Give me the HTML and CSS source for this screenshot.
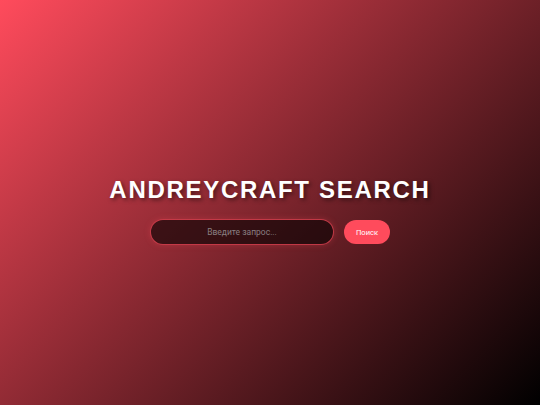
FILE: index.html
```html
<!DOCTYPE html>
<html lang="ru">
<head>
<meta charset="utf-8">
<title>AndreyCraft Search</title>
<link rel="stylesheet" href="styles.css">
</head>
<body>
<main class="page">
  <h1 class="title">AndreyCraft Search</h1>
  <form class="search">
    <input class="search-input" type="text" placeholder="Введите запрос...">
    <button class="search-btn" type="button">Поиск</button>
  </form>
</main>
</body>
</html>
```
FILE: styles.css
```css
html, body {
  margin: 0;
  height: 100%;
}
body {
  background: linear-gradient(135deg, #ff4b5c 0%, #000000 100%);
  font-family: "Liberation Sans", Arial, sans-serif;
}
.page {
  box-sizing: border-box;
  min-height: 100vh;
  padding-top: 16px;
  display: flex;
  flex-direction: column;
  align-items: center;
  justify-content: center;
}
.title {
  margin: 0 0 15px 0;
  font-size: 24px;
  line-height: 28px;
  font-weight: bold;
  text-transform: uppercase;
  letter-spacing: 1.7px;
  color: #fff;
  text-shadow: 2px 2px 4px rgba(0, 0, 0, 0.5);
}
.search {
  display: flex;
  align-items: center;
  gap: 10px;
  margin: 0;
}
.search-input {
  box-sizing: border-box;
  width: 184px;
  height: 26px;
  border: 1px solid rgba(255, 75, 92, 0.7);
  border-radius: 13px;
  background: rgba(0, 0, 0, 0.6);
  color: #ddd;
  text-align: center;
  font-family: Roboto, "Liberation Sans", sans-serif;
  font-size: 8.5px;
  outline: none;
  padding: 0 10px;
  box-shadow: 0 0 6px rgba(255, 75, 92, 0.25);
}
.search-input::placeholder {
  color: #8a7f82;
}
.search-btn {
  box-sizing: border-box;
  width: 46px;
  height: 24px;
  border: none;
  border-radius: 12px;
  background: #ff4b5c;
  color: #fff;
  font-family: Roboto, "Liberation Sans", sans-serif;
  font-size: 7.6px;
  padding: 0;
  cursor: pointer;
}
```
